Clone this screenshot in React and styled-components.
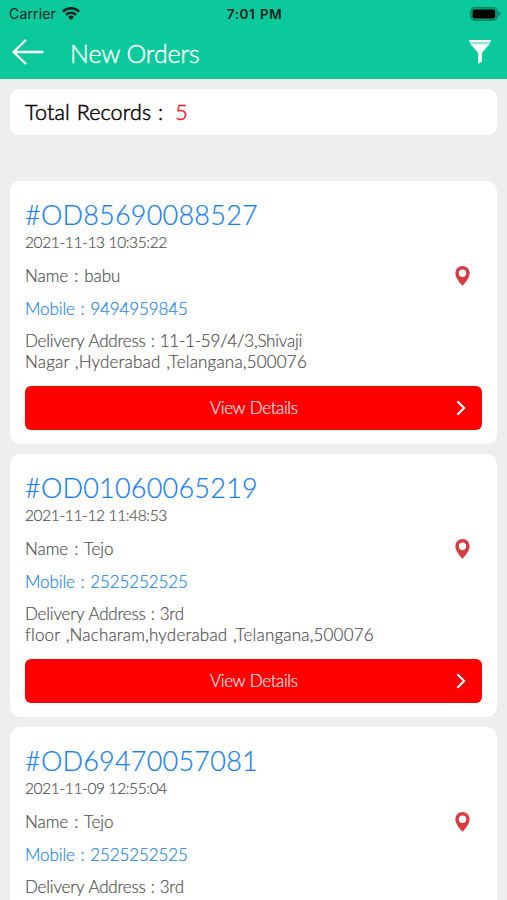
import React from "react";
import styled, { createGlobalStyle } from "styled-components";

const orders = [
  {
    id: "#OD85690088527",
    date: "2021-11-13 10:35:22",
    name: "babu",
    mobile: "9494959845",
    address: ["11-1-59/4/3,Shivaji", "Nagar ,Hyderabad ,Telangana,500076"]
  },
  {
    id: "#OD01060065219",
    date: "2021-11-12 11:48:53",
    name: "Tejo",
    mobile: "2525252525",
    address: ["3rd", "floor ,Nacharam,hyderabad ,Telangana,500076"]
  },
  {
    id: "#OD69470057081",
    date: "2021-11-09 12:55:04",
    name: "Tejo",
    mobile: "2525252525",
    address: ["3rd", "floor ,Nacharam,hyderabad ,Telangana,500076"]
  }
];

const WifiIcon = () => (
  <svg width="18" height="13" viewBox="0 0 18 13" fill="none" stroke="#04231a">
    <path d="M1 4.6a11.3 11.3 0 0 1 16 0" strokeWidth="2.5" />
    <path d="M3.9 7.8a7.2 7.2 0 0 1 10.2 0" strokeWidth="2.4" />
    <path d="M9 12.9 6.1 10a4.1 4.1 0 0 1 5.8 0z" fill="#04231a" stroke="none" />
  </svg>
);

const BatteryIcon = () => (
  <svg width="31" height="14" viewBox="0 0 31 14">
    <rect x="0.7" y="0.7" width="26.6" height="12.6" rx="4" fill="#08a67c" stroke="#067e5f" strokeWidth="1.2" />
    <rect x="2.6" y="2.5" width="22.6" height="9" rx="1.8" fill="#000" />
    <path d="M28.5 4.6c1.6.7 1.9 1.5 1.9 2.4s-.3 1.7-1.9 2.4z" fill="#067e5f" />
  </svg>
);

const BackIcon = () => (
  <svg width="32" height="26" viewBox="0 0 32 26" fill="none" stroke="#fff" strokeWidth="2.3" strokeLinecap="round" strokeLinejoin="round">
    <path d="M13.3 1.5 1.5 13l11.8 11.3M1.5 13h29" />
  </svg>
);

const FilterIcon = () => (
  <svg width="22" height="24" viewBox="0 0 22 24">
    <path d="M0 0h22l-.7 2.6H.7z" fill="#fff" />
    <path d="M.7 2.6h20.6l-1 1.9H1.7z" fill="#9ee7d2" />
    <path d="M1.7 4.3h18.6l-7.4 8.7v8.6L9.2 24V13z" fill="#fff" />
  </svg>
);

const PinIcon = () => (
  <svg width="15" height="20" viewBox="0 0 15 20">
    <path
      d="M7.5 0A7.2 7.2 0 0 0 .3 7.2C.3 12.4 7.5 19.8 7.5 19.8s7.2-7.4 7.2-12.6A7.2 7.2 0 0 0 7.5 0zm0 3.6a3.7 3.7 0 1 1 0 7.4 3.7 3.7 0 0 1 0-7.4z"
      fill="#d83b41"
    />
  </svg>
);

const ChevronIcon = () => (
  <svg width="10" height="16" viewBox="0 0 10 16" fill="none" stroke="#fff" strokeWidth="2.1">
    <path d="M1.3 1.3 8.2 8l-6.9 6.7" />
  </svg>
);

class OrderCard extends React.Component {
  render() {
    const { order } = this.props;
    return (
      <Card>
        <OrderId>{order.id}</OrderId>
        <OrderDate>{order.date}</OrderDate>
        <NameRow>
          <Detail>Name : {order.name}</Detail>
          <PinIcon />
        </NameRow>
        <Mobile>Mobile : {order.mobile}</Mobile>
        <Address>
          <AddressLine>Delivery Address : {order.address[0]}</AddressLine>
          <AddressLine $wide>{order.address[1]}</AddressLine>
        </Address>
        <DetailsButton>
          <ButtonLabel>View Details</ButtonLabel>
          <ChevronIcon />
        </DetailsButton>
      </Card>
    );
  }
}

const App = () => (
  <Screen>
    <GlobalStyle />
    <Header>
      <StatusBar>
        <Carrier>
          Carrier
          <WifiIcon />
        </Carrier>
        <Clock>7:01 PM</Clock>
        <Battery>
          <BatteryIcon />
        </Battery>
      </StatusBar>
      <NavBar>
        <BackIcon />
        <Title>New Orders</Title>
        <FilterIcon />
      </NavBar>
    </Header>
    <Total>
      Total Records :<Count>5</Count>
    </Total>
    <OrderList>
      {orders.map(order => (
        <OrderCard key={order.id} order={order} />
      ))}
    </OrderList>
  </Screen>
);

export default App;

const GlobalStyle = createGlobalStyle`
  * {
    box-sizing: border-box;
  }
  body {
    margin: 0;
    background: #eeeeee;
    overflow: hidden;
  }
  svg {
    display: block;
    flex-shrink: 0;
  }
`;

const Screen = styled.div`
  height: 900px;
  overflow: hidden;
  background: #eeeeee;
  font-family: Lato, sans-serif;
  white-space: nowrap;
`;

const Header = styled.div`
  height: 79px;
  background: #0bc99a;
`;

const StatusBar = styled.div`
  display: grid;
  grid-template-columns: 1fr auto 1fr;
  align-items: center;
  height: 27px;
  padding: 0 6px 0 9px;
  font-family: Inter, sans-serif;
  font-size: 14px;
  color: #04231a;
`;

const Carrier = styled.div`
  display: flex;
  align-items: center;
  gap: 6px;
  letter-spacing: 0.15px;
`;

const Clock = styled.div`
  padding-right: 1px;
  font-size: 13.5px;
  font-weight: 600;
  letter-spacing: 0.5px;
  word-spacing: 1px;
`;

const Battery = styled.div`
  display: flex;
  justify-content: flex-end;
`;

const NavBar = styled.div`
  display: flex;
  align-items: center;
  height: 50px;
  padding: 0 16px 0 12px;
`;

const Title = styled.div`
  flex: 1;
  margin-left: 26px;
  padding-top: 2px;
  font-size: 25px;
  font-weight: 300;
  line-height: 32px;
  letter-spacing: -0.1px;
  -webkit-text-stroke: 0.4px #fff;
  color: #fff;
`;

const Total = styled.div`
  display: flex;
  align-items: center;
  height: 46px;
  margin: 10px 10px 0;
  padding: 0 15px;
  border-radius: 9px;
  background: #fff;
  font-size: 21.5px;
  font-weight: 300;
  letter-spacing: 0.15px;
  word-spacing: 0.8px;
  -webkit-text-stroke: 0.5px currentColor;
  color: #000;
`;

const Count = styled.span`
  margin-left: 12px;
  color: #f4161c;
`;

const OrderList = styled.div`
  display: flex;
  flex-direction: column;
  gap: 10px;
  margin: 46px 10px 0;
`;

const Card = styled.div`
  height: 263px;
  padding: 16px 15px 0;
  border-radius: 10px;
  background: #fff;
  color: #505050;
  font-size: 17px;
  font-weight: 300;
  line-height: 20px;
  -webkit-text-stroke: 0.2px currentColor;
`;

const OrderId = styled.div`
  height: 34px;
  font-size: 27px;
  line-height: 35px;
  letter-spacing: 0.22px;
  color: #1580f2;
`;

const OrderDate = styled.div`
  font-size: 15.5px;
  line-height: 22px;
  letter-spacing: -0.37px;
`;

const NameRow = styled.div`
  display: flex;
  align-items: center;
  justify-content: space-between;
  margin-top: 13px;
  padding-right: 12px;
`;

const Detail = styled.div`
  letter-spacing: -0.05px;
  word-spacing: 1.5px;
`;

const Mobile = styled.div`
  margin-top: 13px;
  letter-spacing: -0.1px;
  word-spacing: 1.2px;
  color: #2486e6;
`;

const Address = styled.div`
  margin-top: 12px;
  line-height: 20.5px;
`;

const AddressLine = styled.div`
  letter-spacing: ${({ $wide }) => ($wide ? "0.18px" : "-0.2px")};
  word-spacing: ${({ $wide }) => ($wide ? "0.8px" : "0.7px")};
`;

const DetailsButton = styled.div`
  display: flex;
  align-items: center;
  height: 44px;
  margin-top: 14px;
  padding-right: 16.5px;
  border-radius: 6px;
  background: #fe0000;
`;

const ButtonLabel = styled.div`
  flex: 1;
  padding: 0 0 0 27px;
  text-align: center;
  letter-spacing: -0.4px;
  word-spacing: 0.8px;
  color: #ffe6e6;
`;
